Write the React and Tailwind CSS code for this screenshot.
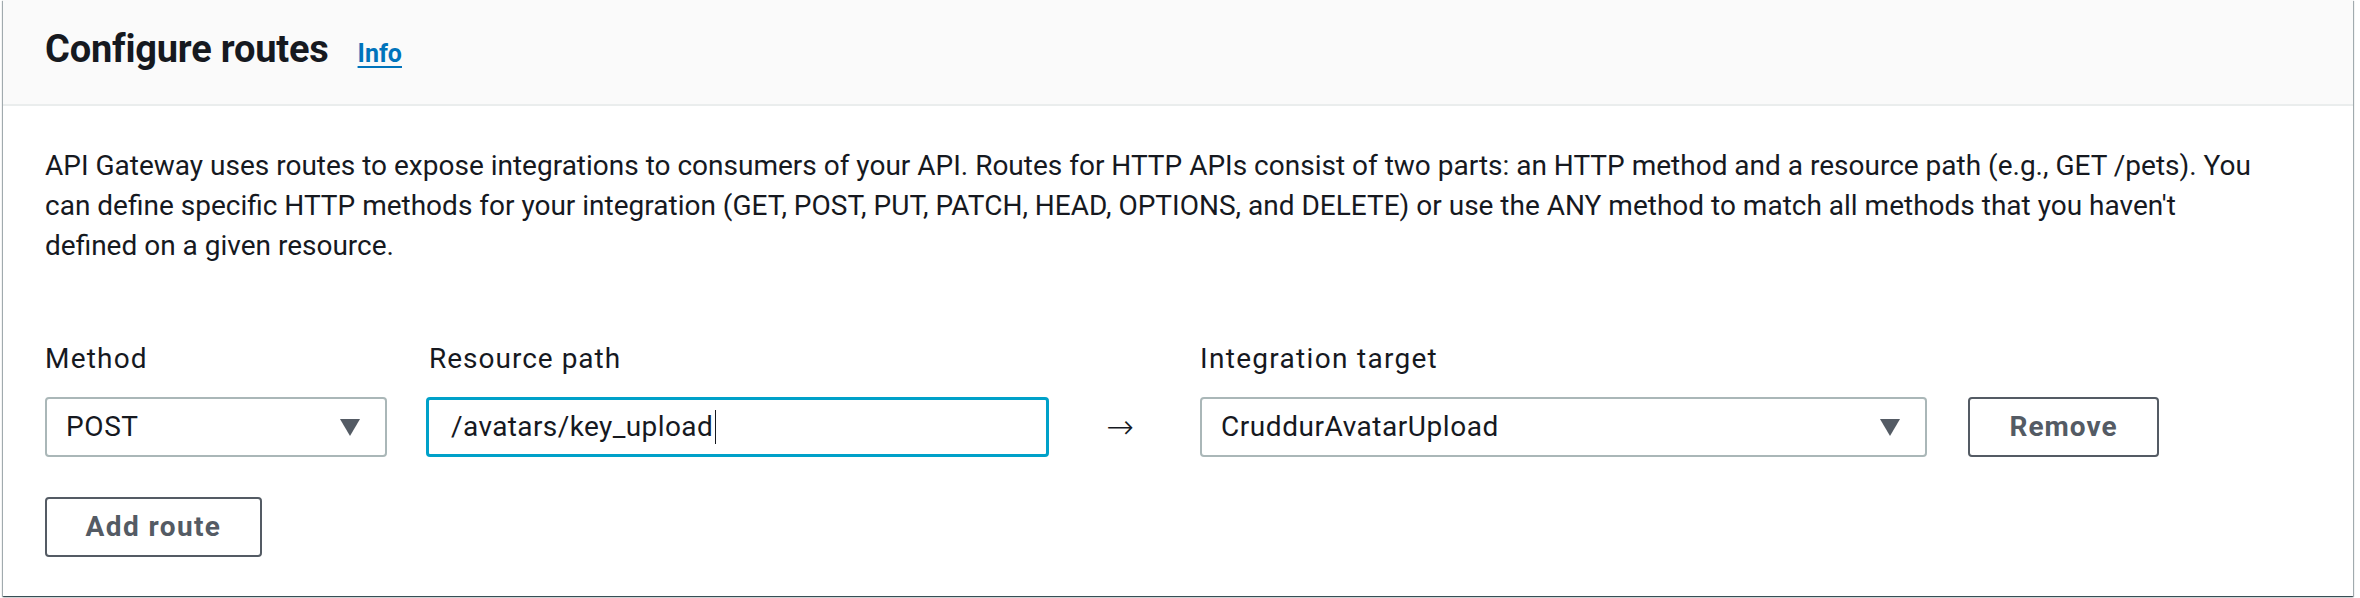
export default function App() {
  const Triangle = () => (
    <svg width="20" height="17" viewBox="0 0 20 17" className="shrink-0">
      <polygon points="0,0 20,0 10,17" fill="#545b64" />
    </svg>
  );
  return (
    <div className="w-[2360px] h-[598px] bg-white overflow-hidden font-['Roboto',sans-serif] text-[#16191f]">
      <div className="ml-[3px] w-[2350px] h-[596px] bg-white flex flex-col shadow-[0_1px_1px_0_rgba(0,28,36,0.55),1px_1px_1px_0_rgba(0,28,36,0.3),-1px_1px_1px_0_rgba(0,28,36,0.3)]">
        <div className="h-[106px] shrink-0 bg-[#fafafa] border-b-2 border-[#eaeded] flex items-baseline px-[42px] pt-[27px]">
          <h2 className="text-[38px] leading-[44px] font-bold tracking-[-0.2px]">Configure routes</h2>
          <a className="ml-[29px] text-[25px] font-bold text-[#0073bb] underline decoration-2 underline-offset-[4px]">Info</a>
        </div>
        <div className="flex flex-col px-[42px] pt-[40px]">
          <p className="text-[28px] leading-[40px] whitespace-nowrap">
            API Gateway uses routes to expose integrations to consumers of your API. Routes for HTTP APIs consist of two parts: an HTTP method and a resource path (e.g., GET /pets). You
            <br />
            can define specific HTTP methods for your integration (GET, POST, PUT, PATCH, HEAD, OPTIONS, and DELETE) or use the ANY method to match all methods that you haven't
            <br />
            defined on a given resource.
          </p>
          <div className="mt-[73px] flex items-end">
            <div className="w-[342px] flex flex-col">
              <label className="text-[28px] leading-[40px] mb-[18px] tracking-[1.2px]">Method</label>
              <div className="h-[60px] border-2 border-[#aab7b8] rounded-[4px] flex items-center justify-between pl-[19px] pr-[25px]">
                <span className="text-[28px] leading-[40px] tracking-[0.6px]">POST</span>
                <Triangle />
              </div>
            </div>
            <div className="ml-[39px] w-[623px] flex flex-col">
              <label className="text-[28px] leading-[40px] mb-[18px] pl-[3px] tracking-[1px]">Resource path</label>
              <div className="h-[60px] border-[3px] border-[#00a1c9] rounded-[4px] flex items-center pl-[22px]">
                <span className="text-[28px] leading-[40px] tracking-[0.4px]">/avatars/key_upload</span>
                <span className="ml-[2px] w-[1px] h-[34px] bg-[#16191f]" />
              </div>
            </div>
            <div className="w-[151px] h-[60px] flex items-center justify-center pr-[9px] text-[33px] leading-[40px] font-extralight font-['DejaVu_Sans',sans-serif]">→</div>
            <div className="w-[727px] flex flex-col">
              <label className="text-[28px] leading-[40px] mb-[18px] tracking-[1.3px]">Integration target</label>
              <div className="h-[60px] border-2 border-[#aab7b8] rounded-[4px] flex items-center justify-between pl-[19px] pr-[25px]">
                <span className="text-[28px] leading-[40px] tracking-[0.55px]">CruddurAvatarUpload</span>
                <Triangle />
              </div>
            </div>
            <button className="ml-[41px] w-[191px] h-[60px] border-2 border-[#545b64] rounded-[4px] bg-white text-[28px] font-bold text-[#545b64] tracking-[1px] flex items-center justify-center">Remove</button>
          </div>
          <div className="mt-[40px]">
            <button className="w-[217px] h-[60px] border-2 border-[#545b64] rounded-[4px] bg-white text-[28px] font-bold text-[#545b64] tracking-[1.4px] flex items-center justify-center">Add route</button>
          </div>
        </div>
      </div>
    </div>
  );
}
